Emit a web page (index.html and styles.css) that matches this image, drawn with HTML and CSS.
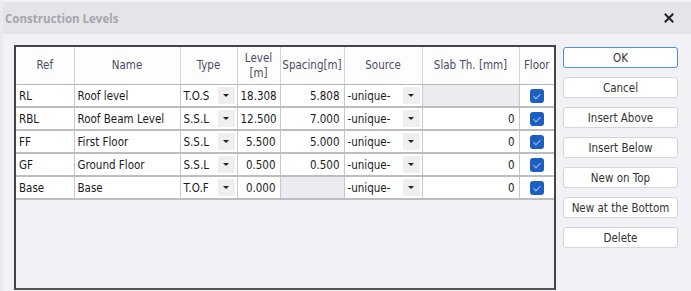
FILE: index.html
```
<!DOCTYPE html>
<html lang="en">
<head>
  <meta charset="UTF-8">
  <title>Construction Levels</title>
  <link rel="stylesheet" href="styles.css">
</head>
<body>
  <div class="dialog">
    <div class="title-bar">
      <span class="title">Construction Levels</span>
      <svg class="close" viewBox="0 0 10 10" width="10" height="10">
        <path d="M1.5 1.5 L8.5 8.5 M8.5 1.5 L1.5 8.5" stroke="#222" stroke-width="2" stroke-linecap="square" />
      </svg>
    </div>

    <div class="content">
      <div class="grid">
        <table class="levels">
          <colgroup>
            <col class="c-ref"><col class="c-name"><col class="c-type"><col class="c-level">
            <col class="c-spacing"><col class="c-source"><col class="c-slab"><col class="c-floor">
          </colgroup>
          <thead>
            <tr>
              <th>Ref</th>
              <th>Name</th>
              <th>Type</th>
              <th>Level<br>[m]</th>
              <th>Spacing[m]</th>
              <th>Source</th>
              <th>Slab Th. [mm]</th>
              <th>Floor</th>
            </tr>
          </thead>
          <tbody>
            <tr>
              <td>RL</td>
              <td>Roof level</td>
              <td class="combo"><div class="field"><span>T.O.S</span><i class="drop"></i></div></td>
              <td class="num">18.308</td>
              <td class="num">5.808</td>
              <td class="combo"><div class="field"><span>-unique-</span><i class="drop"></i></div></td>
              <td class="empty"></td>
              <td class="check"><span class="box"></span></td>
            </tr>
            <tr>
              <td>RBL</td>
              <td>Roof Beam Level</td>
              <td class="combo"><div class="field"><span>S.S.L</span><i class="drop"></i></div></td>
              <td class="num">12.500</td>
              <td class="num">7.000</td>
              <td class="combo"><div class="field"><span>-unique-</span><i class="drop"></i></div></td>
              <td class="num">0</td>
              <td class="check"><span class="box"></span></td>
            </tr>
            <tr>
              <td>FF</td>
              <td>First Floor</td>
              <td class="combo"><div class="field"><span>S.S.L</span><i class="drop"></i></div></td>
              <td class="num">5.500</td>
              <td class="num">5.000</td>
              <td class="combo"><div class="field"><span>-unique-</span><i class="drop"></i></div></td>
              <td class="num">0</td>
              <td class="check"><span class="box"></span></td>
            </tr>
            <tr>
              <td>GF</td>
              <td>Ground Floor</td>
              <td class="combo"><div class="field"><span>S.S.L</span><i class="drop"></i></div></td>
              <td class="num">0.500</td>
              <td class="num">0.500</td>
              <td class="combo"><div class="field"><span>-unique-</span><i class="drop"></i></div></td>
              <td class="num">0</td>
              <td class="check"><span class="box"></span></td>
            </tr>
            <tr>
              <td>Base</td>
              <td>Base</td>
              <td class="combo"><div class="field"><span>T.O.F</span><i class="drop"></i></div></td>
              <td class="num">0.000</td>
              <td class="empty"></td>
              <td class="combo"><div class="field"><span>-unique-</span><i class="drop"></i></div></td>
              <td class="num">0</td>
              <td class="check"><span class="box"></span></td>
            </tr>
          </tbody>
        </table>
      </div>

      <div class="buttons">
        <button class="primary">OK</button>
        <button>Cancel</button>
        <button>Insert Above</button>
        <button>Insert Below</button>
        <button>New on Top</button>
        <button>New at the Bottom</button>
        <button>Delete</button>
      </div>
    </div>
  </div>
</body>
</html>
```

FILE: styles.css
```
body {
  margin: 0;
  background-color: #f2f2f6;
  font-family: "DejaVu Sans Condensed", "DejaVu Sans", sans-serif;
  font-size: 11.5px;
  color: #1a1a1a;
}
.dialog {
  width: 691px;
  height: 291px;
  overflow: hidden;
  border-left: 3px solid #e9e9ee;
  box-sizing: border-box;
}
.title-bar {
  height: 32px;
  margin-top: 2px;
  margin-left: -3px;
  padding: 0 17px 0 5px;
  background-color: #e4e4e9;
  display: flex;
  align-items: center;
  justify-content: space-between;
}
.title {
  font-family: "Open Sans", sans-serif;
  font-weight: 700;
  font-size: 11.5px;
  color: #a6a6ae;
}
.content {
  display: flex;
  align-items: flex-start;
  padding: 11px 0 0 11px;
  gap: 7px;
}
.grid {
  width: 538px;
  height: 241px;
  border: 2px solid #444;
  border-bottom-color: #555;
  background-color: #f1f1f5;
}
.levels {
  border-collapse: collapse;
  table-layout: fixed;
  width: 538px;
}
.c-ref { width: 58px; }
.c-name { width: 106px; }
.c-type { width: 57px; }
.c-level { width: 43px; }
.c-spacing { width: 64px; }
.c-source { width: 78px; }
.c-slab { width: 97px; }
.c-floor { width: 35px; }
th {
  height: 37px;
  padding: 0;
  background-color: #fdfdfd;
  font-weight: 400;
  color: #4c4c64;
  line-height: 15px;
  border-left: 1px solid #d4d4d8;
  border-bottom: 1px solid #b8b8bc;
  white-space: nowrap;
}
th:first-child,
td:first-child {
  border-left: none;
}
td {
  height: 21px;
  padding: 0 4px 0 3px;
  background-color: #fff;
  border-left: 1px solid #c8c8cc;
  border-bottom: 2px solid #bdbdc1;
  white-space: nowrap;
  overflow: hidden;
}
td.num {
  text-align: right;
}
td.empty {
  background-color: #ececf0;
}
td.combo {
  padding-right: 2px;
}
.field {
  display: flex;
  align-items: center;
  justify-content: space-between;
}
.drop {
  width: 17px;
  height: 17px;
  background-color: #efeff1;
  display: flex;
  align-items: center;
  justify-content: center;
}
.drop::after {
  content: "";
  border-left: 3px solid transparent;
  border-right: 3px solid transparent;
  border-top: 3px solid #222;
}
td.check {
  text-align: center;
  padding: 0;
}
.box {
  display: inline-block;
  width: 14px;
  height: 14px;
  margin-top: 3px;
  border-radius: 3px;
  background-color: #1d5fbf;
  position: relative;
}
.box::after {
  content: "";
  position: absolute;
  left: 5px;
  top: 3px;
  width: 3px;
  height: 6px;
  border-right: 1px solid #9fbde8;
  border-bottom: 1px solid #9fbde8;
  transform: rotate(45deg);
}
.buttons {
  display: flex;
  flex-direction: column;
  gap: 9px;
  padding-top: 2px;
}
button {
  width: 115px;
  height: 21px;
  padding: 0;
  background-color: #fff;
  border: 1px solid #d6d6da;
  border-radius: 3px;
  font-family: "DejaVu Sans Condensed", "DejaVu Sans", sans-serif;
  font-size: 11.5px;
  color: #333;
}
button.primary {
  border-color: #4a90e2;
}
```
